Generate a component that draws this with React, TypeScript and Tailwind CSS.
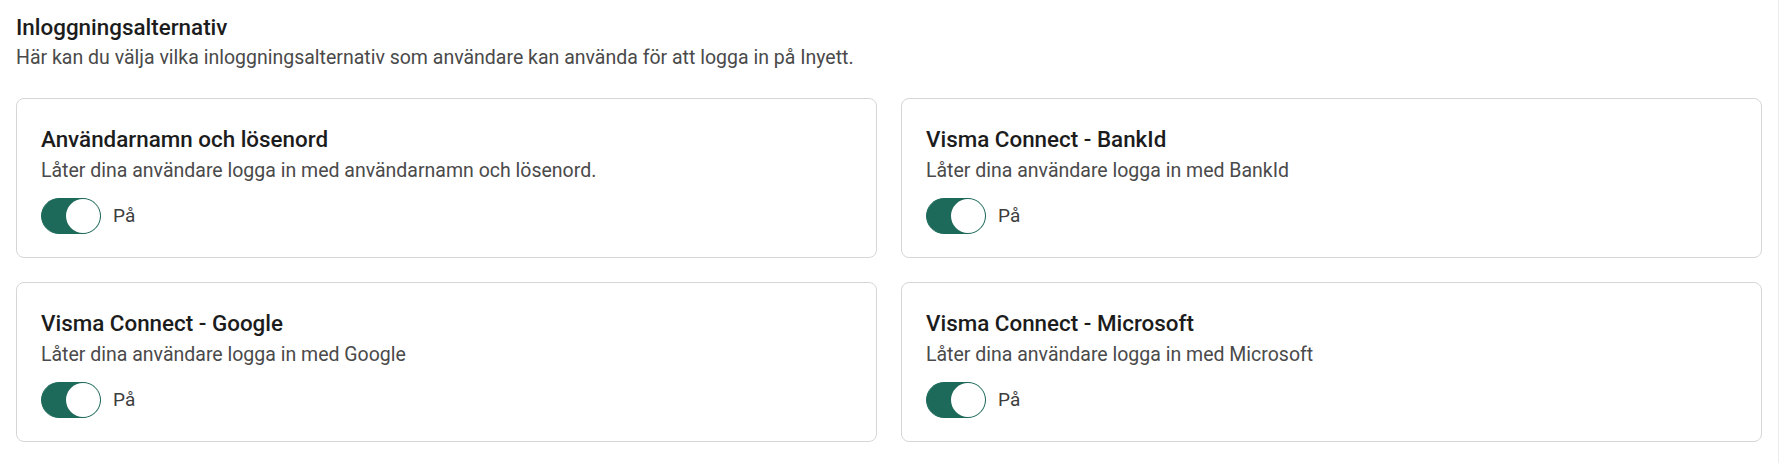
import { useState } from "react"

const options = [
    { title: 'Användarnamn och lösenord', desc: 'Låter dina användare logga in med användarnamn och lösenord.' },
    { title: 'Visma Connect - BankId', desc: 'Låter dina användare logga in med BankId' },
    { title: 'Visma Connect - Google', desc: 'Låter dina användare logga in med Google' },
    { title: 'Visma Connect - Microsoft', desc: 'Låter dina användare logga in med Microsoft' },
]

const Toggle = ({ on, onChange }: { on: boolean, onChange: () => void }) => (
    <button
        onClick={onChange}
        className={`flex h-9 w-[60px] items-center rounded-full border ${on ? 'border-[#1e6a5a] bg-[#1e6a5a] justify-end' : 'border-[#8a8a8a] bg-[#e6e6e6] justify-start'}`}
    >
        <span className="block h-[34px] w-[34px] rounded-full bg-white" />
    </button>
)

const OptionCard = ({ title, desc }: { title: string, desc: string }) => {
    const [on, setOn] = useState(true)
    return (
        <div className="rounded-lg border border-[#d6d6d6] bg-white px-6 pt-[26px] pb-[23px]">
            <h3 className="text-[22.4px] font-medium leading-7 text-[#1c1c1c]">{title}</h3>
            <p className="mt-[4px] text-[19.5px] leading-7 text-[#4a4a4a]">{desc}</p>
            <div className="mt-[13px] flex items-center gap-3">
                <Toggle on={on} onChange={() => setOn(!on)} />
                <span className="text-[19px] leading-7 text-[#3d3d3d]">{on ? 'På' : 'Av'}</span>
            </div>
        </div>
    )
}

export default function App() {
    return (
        <div className="flex min-h-screen bg-white font-['Roboto',sans-serif]">
            <div className="flex-1 px-4 pt-[13px]">
                {/* Rubrik */}
                <h2 className="text-[22.4px] font-medium leading-7 text-[#1c1c1c]">Inloggningsalternativ</h2>
                <p className="mt-[3px] text-[19.5px] leading-7 text-[#4a4a4a]">
                    Här kan du välja vilka inloggningsalternativ som användare kan använda för att logga in på Inyett.
                </p>

                {/* Kort */}
                <div className="mt-[26px] grid grid-cols-2 gap-6">
                    {options.map((o) => (
                        <OptionCard key={o.title} title={o.title} desc={o.desc} />
                    ))}
                </div>
            </div>
            <div className="w-[9px] border-l border-[#ececec] bg-white" />
        </div>
    )
}
